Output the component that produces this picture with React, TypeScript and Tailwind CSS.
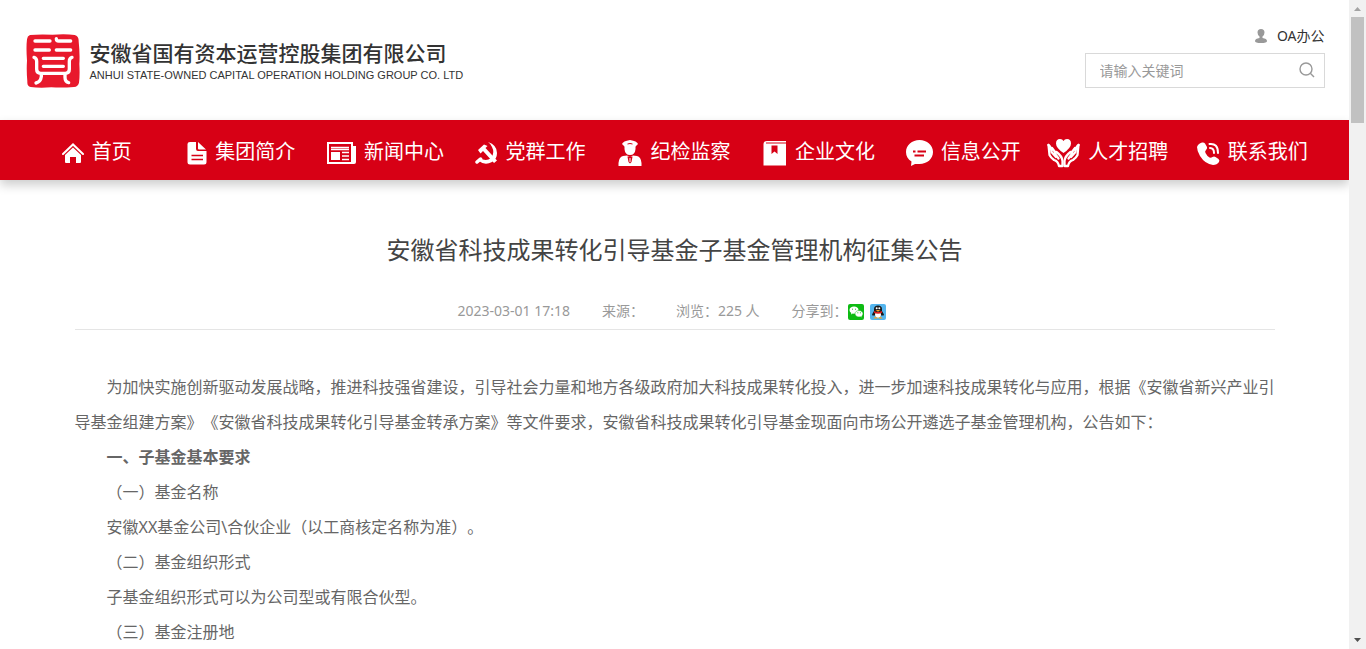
import React from 'react';

interface NavItem {
  label: string;
  icon: React.ReactNode;
}

const RED = '#d70015';

const SealLogo = () => (
  <svg width="54" height="54" viewBox="0 0 162 162" fill="none" aria-hidden="true">
    <path
      d="M12 3 Q40 0 80 2 Q120 -1 146 3 Q159 7 158 22 Q162 60 160 90 Q162 125 159 146 Q156 158 144 159 Q110 162 76 160 Q40 163 14 159 Q3 157 4 142 Q1 110 3 80 Q0 40 3 16 Q4 6 12 3Z"
      fill="#e8192c"
    />
    <g stroke="#fff" strokeWidth="10" strokeLinecap="round" strokeLinejoin="round">
      <path d="M27 21H72M91 14Q91 21 98 21H134" />
      <path d="M27 48H70M91 48H134" />
      <path d="M52 73H112M52 97H112" />
      <path d="M24 70Q32 72 32 82V106Q32 118 44 118H118Q130 118 130 106V82Q130 72 138 70" />
      <path d="M46 120V128Q44 144 30 147M117 120V130Q117 144 128 146" />
    </g>
  </svg>
);

const HomeIcon = () => (
  <svg width="22" height="20" viewBox="0 0 22 20" aria-hidden="true">
    <path d="M1 11 11 1.5 21 11" fill="none" stroke="#fff" strokeWidth="2" strokeLinecap="round" />
    <path d="M11 4.500 19 12V19Q19 20 18 20H14V14H8V20H4Q3 20 3 19V12Z" fill="#fff" />
  </svg>
);

const DocIcon = () => (
  <svg width="20" height="24" viewBox="0 0 20 24" aria-hidden="true">
    <path d="M3 1H9V8Q9 10 11 10H19.500V21Q19.500 23.500 17 23.500H3Q.5 23.500 .5 21V3Q.5 1 3 1Z" fill="#fff" />
    <path d="M11 1 19 8.500H12Q11 8.500 11 7.500Z" fill="#fff" />
    <path d="M4.500 14.500H16M4.500 18.500H16" stroke={RED} strokeWidth="1.300" />
  </svg>
);

const NewsIcon = () => (
  <svg width="29" height="22" viewBox="0 0 29 22" aria-hidden="true">
    <path d="M1 1H25V21H1Z" fill="none" stroke="#fff" strokeWidth="2" />
    <path d="M24 4H29V20Q29 22 27 22H24Z" fill="#fff" />
    <path d="M4 10H13V18H4Z" fill="#fff" />
    <path d="M4 5.500H22M4 7.500H22M15 10.500H22M15 14H22M15 17.500H22" stroke="#fff" strokeWidth="1.300" />
  </svg>
);

const PartyIcon = () => (
  <svg width="23" height="22" viewBox="0 0 23 22" aria-hidden="true">
    <path d="M13 0Q22 3 22 11Q22 17 17 20Q10 24 4 19L5 16Q11 20 16 16Q20 11 17 5Q16 2 13 0Z" fill="#fff" />
    <path d="M3 8 9 2.500 12.500 4 10.500 6 22 18.500 19 21 8 9 5.500 11.500Z" fill="#fff" />
    <path d="M5.500 17 2 20" stroke="#fff" strokeWidth="3.500" strokeLinecap="round" />
  </svg>
);

const OfficerIcon = () => (
  <svg width="24" height="26" viewBox="0 0 24 26" aria-hidden="true">
    <path d="M4 4Q5 1 12 0Q19 1 20 4L17.500 6.500H6.500Z" fill="#fff" />
    <path d="M6.500 6H17.500V9Q17 15 12 15Q7 15 6.500 9Z" fill="#fff" />
    <path d="M.5 26V23Q1 17 5 16L9 15.500 12 17 15 15.500 19 16Q23 17 23.500 23V26Z" fill="#fff" />
    <path d="M9.500 4Q12 3 14.500 4" fill="none" stroke={RED} strokeWidth="1" />
    <path d="M9.500 16.500H14.500L13.500 22 12 23.500 10.500 22Z" fill={RED} />
    <path d="M11.500 18H12.500V22H11.500Z" fill="#fff" />
  </svg>
);

const BookIcon = () => (
  <svg width="24" height="26" viewBox="0 0 24 26" aria-hidden="true">
    <path d="M4 1H23V25.500H.5V4Q.5 1 4 1Z" fill="#fff" />
    <path d="M3 3H23" stroke={RED} strokeWidth="1" />
    <path d="M8.500 5.500H14.500V14L11.500 11.500 8.500 14Z" fill={RED} />
  </svg>
);

const ChatIcon = () => (
  <svg width="27" height="26" viewBox="0 0 27 26" aria-hidden="true">
    <path d="M13.500 0C21 0 27 5 27 12S21 24 13.500 24Q11 24 9 24L5 26 5.500 21.500C2 19.500 0 16 0 12 0 5 6 0 13.500 0Z" fill="#fff" />
    <path d="M7 11.500H9.500M11.500 11.500H20M8.500 15.500H18" stroke={RED} strokeWidth="1.800" />
  </svg>
);

const HandsIcon = () => (
  <svg width="33" height="29" viewBox="0 0 33 29" aria-hidden="true">
    <path d="M16.500 14Q9 9 9 4.500Q9 0 13 0Q15.500 0 16.500 2Q17.500 0 20 0Q24 0 24 4.500Q24 9 16.500 14Z" fill="#fff" />
    <g fill="none" stroke="#fff" strokeWidth="2.300" strokeLinejoin="round" strokeLinecap="round">
      <path d="M1.500 6 2.500 16Q4 19 7 21Q11 22 12 27H15.500V22Q15 17 9.500 13Q7 13 8.500 15.500L11.500 19.500" />
      <path d="M1.500 6Q4 7 4.500 13L9 18M5 9 8 13" />
      <path d="M31.500 6 30.500 16Q29 19 26 21Q22 22 21 27H17.500V22Q18 17 23.500 13Q26 13 24.500 15.500L21.500 19.500" />
      <path d="M31.500 6Q29 7 28.500 13L24 18M28 9 25 13" />
    </g>
  </svg>
);

const PhoneIcon = () => (
  <svg width="23" height="23" viewBox="0 0 23 23" aria-hidden="true">
    <path
      d="M5 .5Q7 0 8 1.500L10 5Q10.500 6.500 9 8Q7.500 9.500 8.500 11Q10 14 12.500 15.500Q14 16 15.500 15Q17 14 18.500 15L21.500 17Q23 18.500 22 20Q20 23 16 23Q8 22 3 14Q0 9 0 5Q1 1.500 5 .5Z"
      fill="#fff"
    />
    <path d="M12.500 2Q21 1 21 11M13 6Q17 6 17 11" fill="none" stroke="#fff" strokeWidth="2" strokeLinecap="round" />
  </svg>
);

const WechatIcon = () => (
  <svg width="16" height="16" viewBox="0 0 16 16" aria-hidden="true">
    <rect width="16" height="16" rx="2" fill="#0dbb13" />
    <path d="M6 2.500C8.500 2.500 10.500 4 10.500 6 10.500 8.200 8.500 9.700 6 9.700L4.800 9.500 3 10.500 3.300 9Q1.500 7.800 1.500 6C1.500 4 3.500 2.500 6 2.500Z" fill="#fff" />
    <path d="M11 6.500C13.300 6.500 15 8 15 9.800Q15 11.200 13.700 12.200L14 13.500 12.400 12.800 11 13C8.800 13 7 11.600 7 9.800S8.800 6.500 11 6.500Z" fill="#fff" stroke="#0dbb13" strokeWidth=".5" />
    <path d="M4.500 5.200h.1M7.500 5.200h.1M9.800 8.800h.1M12.300 8.800h.1" stroke="#0dbb13" strokeLinecap="round" />
  </svg>
);

const QQIcon = () => (
  <svg width="16" height="16" viewBox="0 0 16 16" aria-hidden="true">
    <rect width="16" height="16" rx="2" fill="#54b5ee" />
    <path d="M8 1.500Q12 1.500 12 5V7L14 10.500 13 12 12 11 10 13H6L4 11 3 12 2 10.500 4 7V5Q4 1.500 8 1.500Z" fill="#1a1a1a" />
    <ellipse cx="8" cy="10.800" rx="3" ry="3" fill="#fff" />
    <circle cx="6.700" cy="4.300" r="1" fill="#fff" />
    <circle cx="9.300" cy="4.300" r="1" fill="#fff" />
    <path d="M4 7Q8 9 12 7V8.800Q8 10.500 4 8.800Z" fill="#e02020" />
    <path d="M5.500 6H10.500L8 7.500Z" fill="#f5a623" />
    <path d="M3.500 14.500Q4.500 12 7.500 13.500V14.500ZM12.500 14.500Q11.500 12 8.500 13.500V14.500Z" fill="#f5a623" />
  </svg>
);

const NAV_ITEMS: NavItem[] = [
  { label: '首页', icon: <HomeIcon /> },
  { label: '集团简介', icon: <DocIcon /> },
  { label: '新闻中心', icon: <NewsIcon /> },
  { label: '党群工作', icon: <PartyIcon /> },
  { label: '纪检监察', icon: <OfficerIcon /> },
  { label: '企业文化', icon: <BookIcon /> },
  { label: '信息公开', icon: <ChatIcon /> },
  { label: '人才招聘', icon: <HandsIcon /> },
  { label: '联系我们', icon: <PhoneIcon /> },
];

const PARAGRAPHS: { text: string; bold?: boolean }[] = [
  {
    text: '为加快实施创新驱动发展战略，推进科技强省建设，引导社会力量和地方各级政府加大科技成果转化投入，进一步加速科技成果转化与应用，根据《安徽省新兴产业引导基金组建方案》《安徽省科技成果转化引导基金转承方案》等文件要求，安徽省科技成果转化引导基金现面向市场公开遴选子基金管理机构，公告如下：',
  },
  { text: '一、子基金基本要求', bold: true },
  { text: '（一）基金名称' },
  { text: '安徽XX基金公司\\合伙企业（以工商核定名称为准）。' },
  { text: '（二）基金组织形式' },
  { text: '子基金组织形式可以为公司型或有限合伙型。' },
  { text: '（三）基金注册地' },
];

const Header = () => (
  <header className="mx-auto flex h-[120px] max-w-[1300px] justify-between">
    <a href="#" className="flex items-center gap-2.5 pt-0.5 pl-px text-[#333]">
      <SealLogo />
      <span className="flex flex-col">
        <span className="text-[21px] leading-7 font-medium">安徽省国有资本运营控股集团有限公司</span>
        <span className="font-['Liberation_Sans',Arial,sans-serif] text-[11px] leading-4">
          ANHUI STATE-OWNED CAPITAL OPERATION HOLDING GROUP CO. LTD
        </span>
      </span>
    </a>
    <div className="flex w-60 flex-col items-end pt-[26px]">
      <a href="#" className="flex items-center gap-2.5 text-sm leading-5 text-[#333]">
        <svg width="12" height="14" viewBox="0 0 12 14" fill="#999" aria-hidden="true">
          <path d="M6 0Q9.500 0 9.500 3.500Q9.500 6 7.500 7.500V9Q12 9.500 12 12Q12 14 6 14T0 12Q0 9.500 4.500 9V7.500Q2.500 6 2.500 3.500Q2.500 0 6 0Z" />
        </svg>
        OA办公
      </a>
      <form className="mt-[7px] flex h-[35px] w-full items-center border border-[#d9d9d9] px-2">
        <input
          type="text"
          aria-label="请输入关键词"
          placeholder="请输入关键词"
          className="min-w-0 flex-1 px-1.5 text-sm text-[#333] outline-none placeholder:text-[#999]"
        />
        <button type="button" aria-label="搜索" className="pr-px pb-0.5">
          <svg width="16" height="16" viewBox="0 0 16 16" fill="none" stroke="#999" strokeWidth="1.400">
            <circle cx="7" cy="7" r="6" />
            <path d="M11.300 11.300 15 15" />
          </svg>
        </button>
      </form>
    </div>
  </header>
);

const Nav = () => (
  <nav className="bg-[#d70015] shadow-[0_5px_10px_rgba(0,0,0,0.2)]">
    <ul className="mx-auto grid max-w-[1300px] grid-cols-9">
      {NAV_ITEMS.map((item) => (
        <li key={item.label}>
          <a href="#" className="flex h-[60px] items-center justify-center gap-2 pt-1 text-xl whitespace-nowrap text-white">
            <span className="pt-0.5">{item.icon}</span>
            {item.label}
          </a>
        </li>
      ))}
    </ul>
  </nav>
);

const Article = () => (
  <main className="mx-auto max-w-[1200px] pt-[50px]">
    <h1 className="text-center text-2xl leading-10 text-[#444]">安徽省科技成果转化引导基金子基金管理机构征集公告</h1>
    <div className="mt-[30px] flex items-center justify-center gap-8 border-b border-[#e5e5e5] pr-1.5 pb-[7px] text-sm leading-[22px] text-[#999]">
      <span>2023-03-01 17:18</span>
      <span>来源：</span>
      <span>浏览：225 人</span>
      <span className="flex items-center">
        分享到：
        <span className="flex gap-1.5 pt-0.5">
          <button type="button" aria-label="微信"><WechatIcon /></button>
          <button type="button" aria-label="QQ"><QQIcon /></button>
        </span>
      </span>
    </div>
    <div className="pt-10 text-base leading-[35px] text-[#666]">
      {PARAGRAPHS.map((p) => (
        <p key={p.text} className={p.bold ? 'indent-8 font-bold' : 'indent-8'}>{p.text}</p>
      ))}
    </div>
  </main>
);

const ScrollBar = () => (
  <div className="flex w-[17px] shrink-0 flex-col items-center bg-[#f1f1f1]" aria-hidden="true">
    <svg width="17" height="17" viewBox="0 0 17 17">
      <path d="M5 11H12L8.500 7Z" fill="#a3a3a3" />
    </svg>
    <div className="h-[106px] w-[13px] bg-[#c1c1c1]" />
    <svg className="mt-auto" width="17" height="17" viewBox="0 0 17 17">
      <path d="M5 6H12L8.500 10Z" fill="#505050" />
    </svg>
  </div>
);

export default function App() {
  return (
    <div className="flex h-screen overflow-hidden bg-white font-['Noto_Sans','Noto_Sans_CJK_SC',sans-serif] [text-spacing-trim:space-all]" lang="zh-CN">
      <div className="min-w-0 flex-1 overflow-hidden">
        <Header />
        <Nav />
        <Article />
      </div>
      <ScrollBar />
    </div>
  );
}
